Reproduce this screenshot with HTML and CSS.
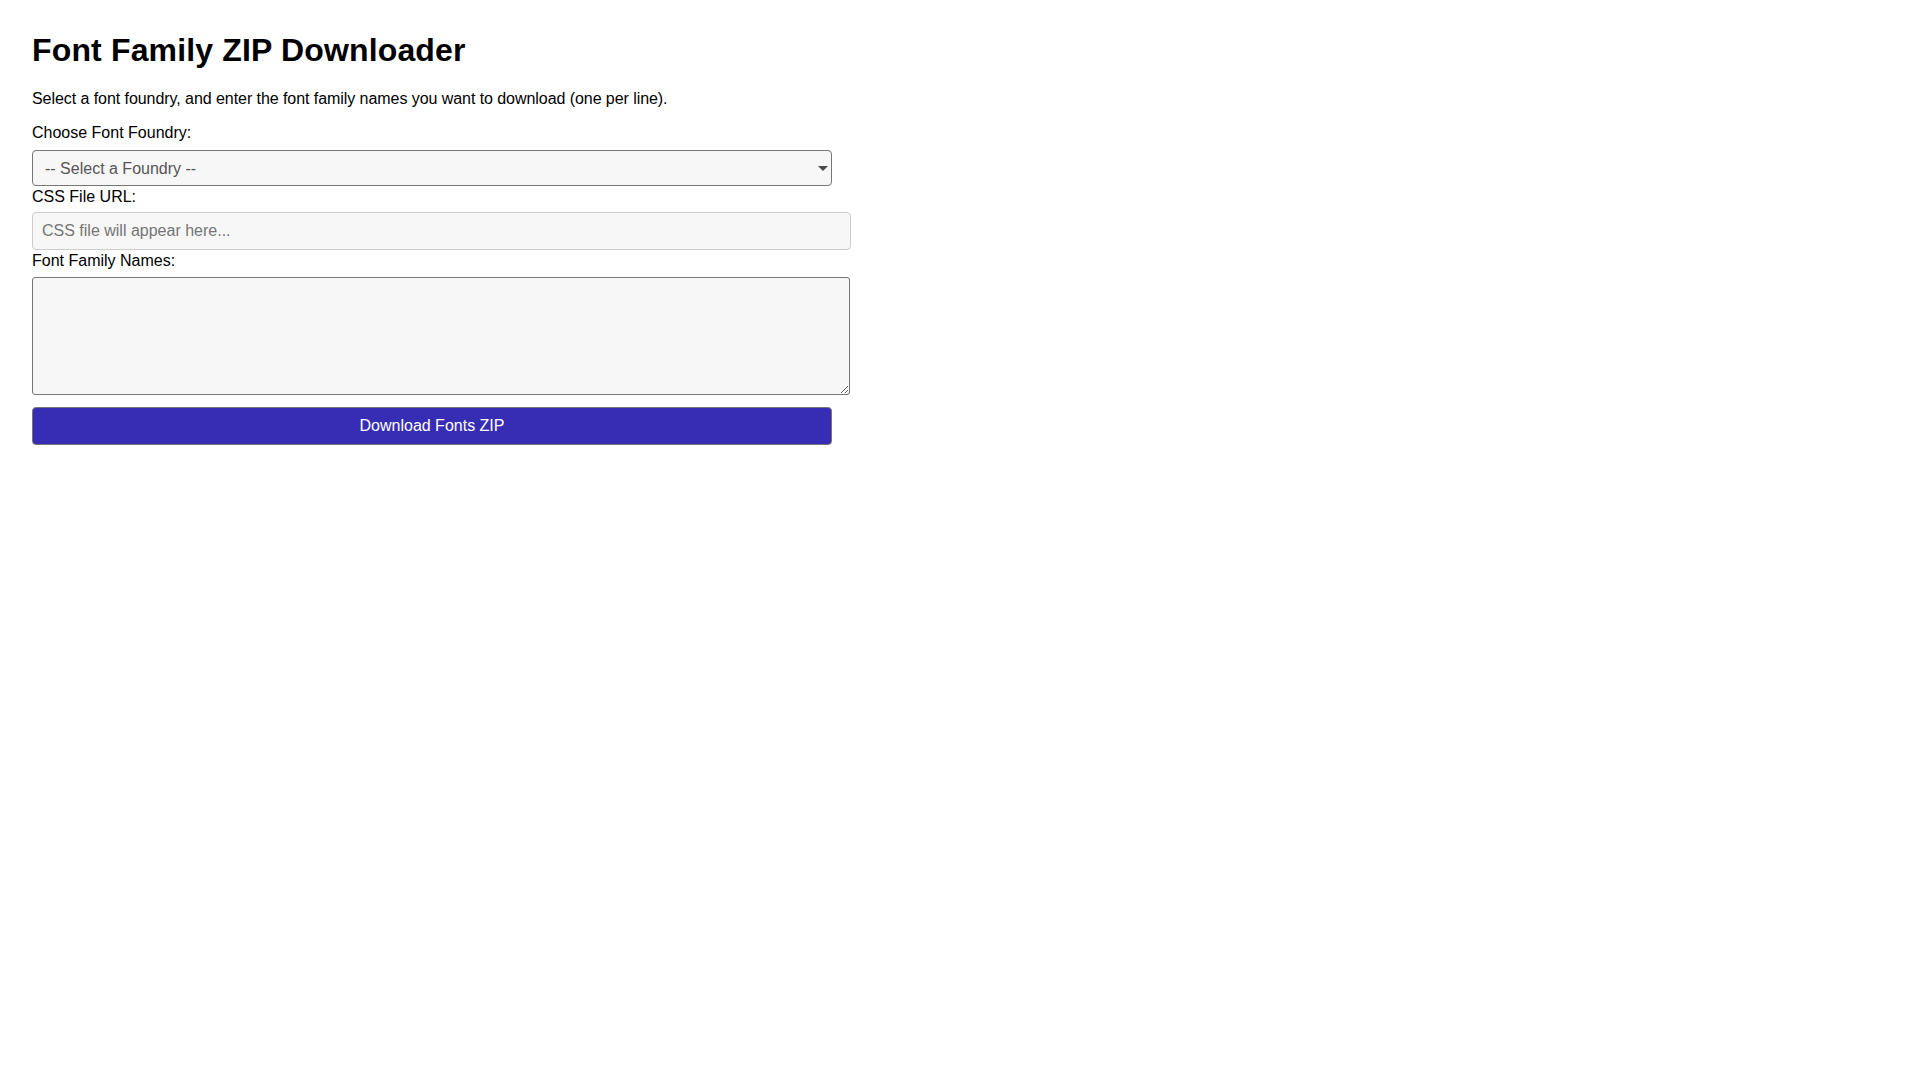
FILE: index.html
```html
<!DOCTYPE html>
<html lang="en">
<head>
<meta charset="utf-8">
<title>Font Family ZIP Downloader</title>
<link rel="stylesheet" href="styles.css">
</head>
<body>
<main class="page">
  <h1 class="title">Font Family ZIP Downloader</h1>
  <p class="intro">Select a font foundry, and enter the font family names you want to download (one per line).</p>
  <form class="form">
    <label class="label" for="foundry">Choose Font Foundry:</label>
    <div class="select-wrap">
      <select class="select" id="foundry">
        <option>-- Select a Foundry --</option>
      </select>
    </div>
    <label class="label" for="cssurl">CSS File URL:</label>
    <input class="input" id="cssurl" type="text" placeholder="CSS file will appear here...">
    <label class="label" for="families">Font Family Names:</label>
    <textarea class="textarea" id="families"></textarea>
    <button class="button" type="button">Download Fonts ZIP</button>
  </form>
</main>
</body>
</html>
```

FILE: styles.css
```css
html, body {
  background: #ffffff;
}
body {
  margin: 32px;
  font-family: "Liberation Sans", Arial, sans-serif;
  font-size: 16px;
  color: #000;
}
.title {
  margin: 0 0 21px;
  font-size: 32px;
  font-weight: bold;
  line-height: normal;
  letter-spacing: 0.15px;
}
.intro {
  margin: 0 0 14px;
  line-height: normal;
  letter-spacing: -0.06px;
}
.form {
  display: flex;
  flex-direction: column;
  align-items: flex-start;
}
.label {
  display: block;
  margin: 2px 0 6px;
  line-height: normal;
}
.select-wrap {
  position: relative;
  width: 800px;
  height: 36px;
  margin-top: 2px;
}
.select-wrap::after {
  content: "";
  position: absolute;
  top: 16px;
  right: 4px;
  width: 0;
  height: 0;
  border-left: 5px solid transparent;
  border-right: 5px solid transparent;
  border-top: 5px solid #4a4a4a;
  pointer-events: none;
}
.select {
  -webkit-appearance: none;
  appearance: none;
  box-sizing: border-box;
  width: 800px;
  height: 36px;
  padding: 8px 12px;
  margin: 0;
  font-family: "Liberation Sans", Arial, sans-serif;
  font-size: 16px;
  color: #555;
  background-color: #f7f7f7;
  border: 1px solid #767676;
  border-radius: 4px;
}
.input {
  box-sizing: border-box;
  width: 819px;
  height: 38px;
  padding: 8px 9px;
  margin: 0;
  font-family: "Liberation Sans", Arial, sans-serif;
  font-size: 16px;
  color: #000;
  background-color: #f7f7f7;
  border: 1px solid #cccccc;
  border-radius: 4px;
}
.input::placeholder {
  color: #757575;
}
.textarea {
  display: block;
  box-sizing: border-box;
  width: 818px;
  height: 118px;
  padding: 8px;
  margin: 1px 0 0;
  font-family: "Liberation Sans", Arial, sans-serif;
  font-size: 16px;
  background-color: #f7f7f7;
  border: 1px solid #767676;
  border-radius: 3px;
}
.button {
  box-sizing: border-box;
  width: 800px;
  height: 38px;
  margin: 12px 0 0;
  padding: 8px;
  font-family: "Liberation Sans", Arial, sans-serif;
  font-size: 16px;
  color: #ffffff;
  background-color: #372db5;
  border: 1px solid #767676;
  border-radius: 4px;
}
```
